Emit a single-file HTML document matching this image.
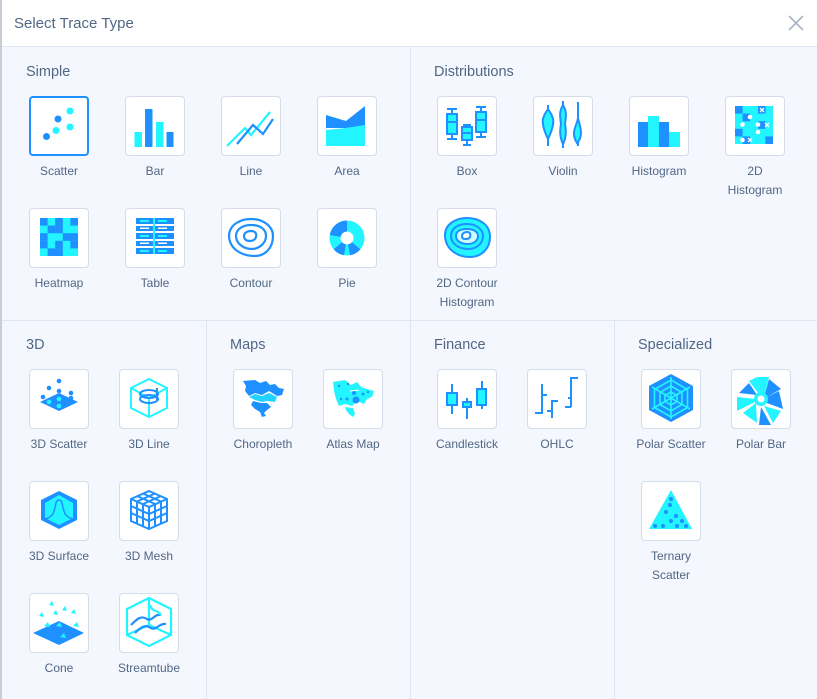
<!DOCTYPE html>
<html><head><meta charset="utf-8"><style>
*{margin:0;padding:0;box-sizing:border-box}
body{width:817px;height:699px;overflow:hidden;background:#f5f7fe;font-family:"Liberation Sans",sans-serif;color:#506784;position:relative}
#lb{position:absolute;left:0;top:0;width:2px;height:699px;background:#c8ced8}
#hd{position:absolute;left:2px;top:0;width:815px;height:47px;background:#fff;border-bottom:1px solid #dfe6f1}
#hd .t{position:absolute;left:12px;top:15px;font-size:15px;color:#506784}
.x{position:absolute;left:786px;top:15px;width:16px;height:16px}
.vl{position:absolute;background:#dfe6f1;width:1px}
.hl{position:absolute;background:#dfe6f1;height:1px}
.h{position:absolute;font-size:14.5px;color:#506784}
.tile{position:absolute;width:60px;height:60px;background:#fff;border:1px solid #d5dde9;border-radius:4px}
.tile.sel{border:2px solid #1e90ff}
.tile svg{position:absolute;left:-1px;top:-1px;width:60px;height:60px}
.tile.sel svg{left:-2px;top:-2px}
.lb{position:absolute;width:100px;text-align:center;font-size:12px;line-height:19px;color:#506784}
</style></head><body>
<div id="lb"></div>
<div id="hd"><div class="t">Select Trace Type</div>
<svg class="x" viewBox="0 0 16 16"><path d="M1 1L15 15M15 1L1 15" stroke="#a8b3c4" stroke-width="1.6"/></svg></div>
<div class="vl" style="left:410px;top:48px;height:651px"></div>
<div class="hl" style="left:2px;top:320px;width:815px"></div>
<div class="vl" style="left:206px;top:320px;height:379px"></div>
<div class="vl" style="left:614px;top:320px;height:379px"></div>

<div class="h" style="left:26px;top:64px">Simple</div>
<div class="h" style="left:434px;top:64px">Distributions</div>
<div class="h" style="left:26px;top:337px">3D</div>
<div class="h" style="left:230px;top:337px">Maps</div>
<div class="h" style="left:434px;top:337px">Finance</div>
<div class="h" style="left:638px;top:337px">Specialized</div>

<!-- Scatter -->
<div class="tile sel" style="left:29px;top:96px"><svg viewBox="0 0 60 60"><circle cx="17.5" cy="40.5" r="3.5" fill="#1e90ff"/><circle cx="27" cy="34.5" r="3.5" fill="#22f5ff"/><circle cx="29" cy="23" r="3.5" fill="#1e90ff"/><circle cx="41" cy="15" r="3.5" fill="#22f5ff"/><circle cx="41" cy="31" r="3.5" fill="#22f5ff"/></svg></div>
<div class="lb" style="left:9px;top:162px">Scatter</div>
<!-- Bar -->
<div class="tile" style="left:125px;top:96px"><svg viewBox="0 0 60 60"><rect x="9.5" y="36" width="7.5" height="15" fill="#22f5ff"/><rect x="20" y="13" width="7.5" height="38" fill="#1e90ff"/><rect x="31" y="26" width="7.5" height="25" fill="#22f5ff"/><rect x="41.5" y="36" width="7" height="15" fill="#1e90ff"/></svg></div>
<div class="lb" style="left:105px;top:162px">Bar</div>
<!-- Line -->
<div class="tile" style="left:221px;top:96px"><svg viewBox="0 0 60 60" fill="none" stroke-width="2.2"><path d="M6 50L24 32L30 39L49 16" stroke="#22f5ff"/><path d="M16 48L32 29L42 38L52 23" stroke="#1e90ff"/></svg></div>
<div class="lb" style="left:201px;top:162px">Line</div>
<!-- Area -->
<div class="tile" style="left:317px;top:96px"><svg viewBox="0 0 60 60"><path d="M9 19L29 25L48 10V30L29 32L9 32Z" fill="#1e90ff"/><path d="M9 34L29 32L48 29V50H9Z" fill="#22f5ff"/></svg></div>
<div class="lb" style="left:297px;top:162px">Area</div>
<!-- Heatmap -->
<div class="tile" style="left:29px;top:208px"><svg viewBox="0 0 60 60"><rect x="11" y="10" width="38" height="38" fill="#22f5ff"/><g fill="#1e90ff"><rect x="11" y="10" width="7.6" height="7.6"/><rect x="26.2" y="10" width="7.6" height="7.6"/><rect x="41.4" y="10" width="7.6" height="7.6"/><rect x="18.6" y="17.6" width="7.6" height="7.6"/><rect x="26.2" y="17.6" width="7.6" height="7.6"/><rect x="11" y="25.2" width="7.6" height="7.6"/><rect x="33.8" y="25.2" width="15.2" height="7.6"/><rect x="11" y="32.8" width="7.6" height="7.6"/><rect x="26.2" y="32.8" width="7.6" height="7.6"/><rect x="41.4" y="32.8" width="7.6" height="7.6"/><rect x="18.6" y="40.4" width="15.2" height="7.6"/></g></svg></div>
<div class="lb" style="left:9px;top:274px">Heatmap</div>
<!-- Table -->
<div class="tile" style="left:125px;top:208px"><svg viewBox="0 0 60 60"><g fill="#1e90ff"><rect x="11" y="10" width="38" height="6"/><rect x="11" y="18" width="38" height="5"/><rect x="11" y="25" width="38" height="6"/><rect x="11" y="33" width="38" height="5"/><rect x="11" y="40" width="38" height="6"/></g><rect x="28" y="10" width="2" height="36" fill="#22f5ff"/><g fill="#22f5ff"><rect x="15" y="12" width="9" height="2"/><rect x="33" y="12" width="9" height="2"/><rect x="15" y="27" width="9" height="2"/><rect x="33" y="27" width="9" height="2"/><rect x="15" y="42" width="9" height="2"/><rect x="33" y="42" width="9" height="2"/></g><g fill="#fff"><rect x="15" y="19.5" width="9" height="1.5"/><rect x="33" y="19.5" width="9" height="1.5"/><rect x="15" y="34.5" width="9" height="1.5"/><rect x="33" y="34.5" width="9" height="1.5"/></g></svg></div>
<div class="lb" style="left:105px;top:274px">Table</div>
<!-- Contour -->
<div class="tile" style="left:221px;top:208px"><svg viewBox="0 0 60 60" fill="none" stroke="#1e90ff" stroke-width="2.2"><path d="M8 27C9 16 20 11 30 11C42 11 52 18 52 28C52 40 44 48 34 48C22 48 8 42 8 27Z"/><path d="M15 28C15 21 22 17 30 17C39 17 45 21 45 28C45 35 38 41 31 41C22 41 15 35 15 28Z"/><path d="M23 28C23 25 26 23 30 23C34 23 36 25 35 29C34 32 31 33 29 33C25 33 23 31 23 28Z"/></svg></div>
<div class="lb" style="left:201px;top:274px">Contour</div>
<!-- Pie -->
<div class="tile" style="left:317px;top:208px"><svg viewBox="0 0 60 60"><circle cx="30" cy="30" r="12" fill="none" stroke="#22f5ff" stroke-width="11"/><path d="M30 12.5A17.5 17.5 0 0 0 12.8 27L23.6 28.9A6.5 6.5 0 0 1 30 23.5Z" fill="#1e90ff"/><path d="M43.4 41.2A17.5 17.5 0 0 1 33 47.2L31.1 36.4A6.5 6.5 0 0 0 35 34.2Z" fill="#1e90ff"/><path d="M27 47.2A17.5 17.5 0 0 1 16.6 41.2L25 34.2A6.5 6.5 0 0 0 28.9 36.4Z" fill="#1e90ff"/></svg></div>
<div class="lb" style="left:297px;top:274px">Pie</div>

<!-- Box -->
<div class="tile" style="left:437px;top:96px"><svg viewBox="0 0 60 60" fill="none" stroke="#1e90ff" stroke-width="2"><path d="M10 13H20M15 13V18M15 38V43M10 43H20M26 29H34M30 29V31M30 44V49M26 49H34M39 11H49M44 11V16M44 36V41M39 41H49"/><rect x="10" y="18" width="10" height="20" fill="#22f5ff"/><path d="M10 26H20"/><rect x="25" y="31" width="10" height="13" fill="#22f5ff"/><path d="M25 37H35"/><rect x="39" y="16" width="10" height="20" fill="#22f5ff"/><path d="M39 24H49"/></svg></div>
<div class="lb" style="left:417px;top:162px">Box</div>
<!-- Violin -->
<div class="tile" style="left:533px;top:96px"><svg viewBox="0 0 60 60" stroke="#1e90ff" stroke-width="2" fill="#22f5ff"><path d="M15 9V50"/><path d="M15 13C9 22 7 26 15 43C23 26 21 22 15 13Z"/><path d="M30 5V52"/><path d="M30 9C26 16 27 20 28 28C26 38 28 44 30 48C32 44 34 38 32 28C33 20 34 16 30 9Z"/><path d="M45 6V50"/><path d="M45 22C44 30 37 36 44 47C51 40 47 30 45 22Z"/></svg></div>
<div class="lb" style="left:513px;top:162px">Violin</div>
<!-- Histogram -->
<div class="tile" style="left:629px;top:96px"><svg viewBox="0 0 60 60"><rect x="9" y="26" width="10" height="25" fill="#1e90ff"/><rect x="19" y="20" width="11" height="31" fill="#22f5ff"/><rect x="30" y="26" width="10" height="25" fill="#1e90ff"/><rect x="40" y="36" width="11" height="15" fill="#22f5ff"/></svg></div>
<div class="lb" style="left:609px;top:162px">Histogram</div>
<!-- 2D Histogram -->
<div class="tile" style="left:725px;top:96px"><svg viewBox="0 0 60 60"><rect x="10" y="10" width="38" height="38" fill="#22f5ff"/><g fill="#1e90ff"><rect x="10" y="10" width="7.6" height="7.6"/><rect x="17.6" y="17.6" width="7.6" height="7.6"/><rect x="33" y="10" width="7.6" height="7.6"/><rect x="10" y="32.8" width="7.6" height="7.6"/><rect x="40.4" y="40.4" width="7.6" height="7.6"/><rect x="17.6" y="40.4" width="7.6" height="7.6"/><rect x="33" y="25.2" width="7.6" height="7.6"/></g><g fill="#fff"><circle cx="25" cy="21" r="2.3"/><circle cx="17.5" cy="28.5" r="2.3"/><circle cx="33" cy="28.5" r="2.3"/><circle cx="33" cy="36" r="2.3"/><circle cx="17.5" cy="44" r="2.3"/></g><path d="M35 12L39 16M39 12L35 16M40 27L44 31M44 27L40 31M23 42L27 46M27 42L23 46" stroke="#fff" stroke-width="1.3"/></svg></div>
<div class="lb" style="left:705px;top:162px;line-height:19px">2D<br>Histogram</div>
<!-- 2D Contour -->
<div class="tile" style="left:437px;top:208px"><svg viewBox="0 0 60 60" stroke="#1e90ff" stroke-width="2"><path d="M8 27C8 16 19 10 30 10C43 10 53 17 53 29C53 41 44 49 33 49C20 49 8 41 8 27Z" fill="#22f5ff"/><path d="M14 28C14 20 21 16 30 16C39 16 46 21 46 28C46 36 39 41 31 41C21 41 14 35 14 28Z" fill="#22f5ff"/><path d="M19 28C19 23 24 21 30 21C37 21 41 24 41 28C41 33 36 36 31 36C24 36 19 33 19 28Z" fill="#ccfcff"/><path d="M25 28C25 26 27 24 30 24C33 24 34 26 33 29C32 31 30 31 28 31C26 31 25 30 25 28Z" fill="#fff"/></svg></div>
<div class="lb" style="left:417px;top:274px">2D Contour<br>Histogram</div>

<!-- 3D Scatter -->
<div class="tile" style="left:29px;top:369px"><svg viewBox="0 0 60 60"><path d="M11 33L30 24L49 33L30 42Z" fill="#1e90ff"/><g fill="#1e90ff"><circle cx="30" cy="12" r="2.3"/><circle cx="20" cy="19" r="2.3"/><circle cx="30" cy="22" r="2.3"/><circle cx="42" cy="24" r="2.3"/><circle cx="14" cy="28" r="2.3"/><circle cx="42" cy="29" r="2.3"/></g><g fill="#22f5ff"><circle cx="20" cy="33" r="2.3"/><circle cx="30" cy="30" r="2.3"/><circle cx="30" cy="37" r="2.3"/></g></svg></div>
<div class="lb" style="left:9px;top:435px">3D Scatter</div>
<!-- 3D Line -->
<div class="tile" style="left:119px;top:369px"><svg viewBox="0 0 60 60" fill="none" stroke-width="2"><path d="M30 10L48 19V39L30 48L12 39V19Z M12 19L30 29L48 19 M30 29V48" stroke="#22f5ff"/><ellipse cx="30" cy="25" rx="9" ry="4" stroke="#1e90ff"/><ellipse cx="30" cy="30" rx="9" ry="4" stroke="#1e90ff"/><path d="M38 19V31" stroke="#1e90ff"/></svg></div>
<div class="lb" style="left:99px;top:435px">3D Line</div>
<!-- 3D Surface -->
<div class="tile" style="left:29px;top:481px"><svg viewBox="0 0 60 60"><path d="M30 10L48 19V39L30 48L12 39V19Z" fill="#1e90ff"/><path d="M16 22L30 14L44 22V37L30 44L16 37Z" fill="#22f5ff"/><path d="M16 38C24 36 25 32 27 22C28 18 32 18 33 22C35 32 36 36 44 38" fill="none" stroke="#1e90ff" stroke-width="1.5"/></svg></div>
<div class="lb" style="left:9px;top:547px">3D Surface</div>
<!-- 3D Mesh -->
<div class="tile" style="left:119px;top:481px"><svg viewBox="0 0 60 60" fill="none" stroke="#1e90ff" stroke-width="2"><path d="M30 10L48 18V40L30 48L12 40V18Z M12 18L30 26L48 18 M30 26V48"/><path d="M18 15L36 23M24 12.5L42 20.5M42 15L24 23M36 12.5L18 20.5M12 25L30 33L48 25M12 32L30 40L48 32M18 21V43M24 23.5V45.5M36 23.5V45.5M42 21V43"/></svg></div>
<div class="lb" style="left:99px;top:547px">3D Mesh</div>
<!-- Cone -->
<div class="tile" style="left:29px;top:593px"><svg viewBox="0 0 60 60"><path d="M4 40L30 28L55 40L30 52Z" fill="#1e90ff"/><g fill="#22f5ff"><path d="M20 12l3 -4l2 5z"/><path d="M33 17l3 -4l2 5z"/><path d="M42 20l3 -4l2 5z"/><path d="M10 23l3 -4l2 5z"/><path d="M24 21l3 -4l2 5z"/><path d="M15 33l4 -4l2 5z"/><path d="M27 33l4 -4l2 5z"/><path d="M44 33l4 -4l2 5z"/><path d="M31 44l4 -4l2 5z"/></g></svg></div>
<div class="lb" style="left:9px;top:659px">Cone</div>
<!-- Streamtube -->
<div class="tile" style="left:119px;top:593px"><svg viewBox="0 0 60 60" fill="none" stroke-width="2.2"><path d="M30 5L52 16V42L30 53L8 42V16Z M8 42L30 32L52 42 M30 5V32" stroke="#22f5ff"/><path d="M12 32C18 26 22 22 28 26C33 29 36 20 42 22" stroke="#1e90ff"/><path d="M16 40C22 34 26 31 32 35C37 38 40 30 47 31" stroke="#1e90ff"/><path d="M31 12C34 20 38 16 42 22" stroke="#22f5ff"/></svg></div>
<div class="lb" style="left:99px;top:659px">Streamtube</div>

<!-- Choropleth -->
<div class="tile" style="left:233px;top:369px"><svg viewBox="0 0 60 60"><path d="M10 12L22 11L27 14L33 12L37 16L42 15L46 19L51 20L49 26L44 27L36 22L29 26L22 24L16 27L12 22L13 17Z" fill="#1e90ff"/><path d="M16 28L22 25L29 27L36 24L44 28L42 33L34 32L29 33L22 31Z" fill="#22d3ff"/><path d="M20 32L28 34L34 34L38 38L34 41L31 44L33 47L29 48L27 43L22 40L18 36Z" fill="#1e90ff"/></svg></div>
<div class="lb" style="left:213px;top:435px">Choropleth</div>
<!-- Atlas Map -->
<div class="tile" style="left:323px;top:369px"><svg viewBox="0 0 60 60"><path d="M10 13L22 11L28 16L34 13L38 18L44 20L51 22L49 28L44 30L41 35L34 32L29 37L22 35L16 37L13 30L11 22Z" fill="#22f5ff"/><path d="M22 38L30 39L32 45L30 48L26 45L23 41Z" fill="#22f5ff"/><g fill="#1e90ff"><circle cx="33" cy="31" r="3.5"/><circle cx="31" cy="24" r="2"/><circle cx="24" cy="30" r="1.5"/><circle cx="40" cy="25" r="1.5"/><circle cx="16" cy="17" r="1.2"/><circle cx="25" cy="15" r="1.2"/><circle cx="45" cy="23" r="1.2"/><circle cx="18" cy="30" r="1.2"/></g><path d="M27 22L36 21" stroke="#fff" stroke-width="1"/></svg></div>
<div class="lb" style="left:303px;top:435px">Atlas Map</div>

<!-- Candlestick -->
<div class="tile" style="left:437px;top:369px"><svg viewBox="0 0 60 60" stroke="#1e90ff" stroke-width="2"><path d="M15 15V45M30 29V50M45 12V40" fill="none"/><rect x="10" y="24" width="10" height="12" fill="#22f5ff"/><rect x="26" y="33" width="8" height="5" fill="#22f5ff"/><rect x="40" y="20" width="9" height="16" fill="#22f5ff"/></svg></div>
<div class="lb" style="left:417px;top:435px">Candlestick</div>
<!-- OHLC -->
<div class="tile" style="left:527px;top:369px"><svg viewBox="0 0 60 60" fill="none" stroke="#1e90ff" stroke-width="2"><path d="M15 15V44H8M15 26H20M25 49V32H31M25 42H20M44 38V9H51M44 38H38M44 29H41"/></svg></div>
<div class="lb" style="left:507px;top:435px">OHLC</div>

<!-- Polar Scatter -->
<div class="tile" style="left:641px;top:369px"><svg viewBox="0 0 60 60"><path d="M30 5L52 17V41L30 53L8 41V17Z" fill="#1e90ff"/><g fill="none" stroke="#22f5ff" stroke-width="1.6"><path d="M30 11L46.5 20.5V38.5L30 48L13.5 38.5V20.5Z"/><path d="M30 17L41 23.5V35.5L30 42L19 35.5V23.5Z"/><path d="M30 23L36 26.5V32.5L30 36L24 32.5V26.5Z"/><path d="M30 8V50M11 18L49 40M49 18L11 40"/></g></svg></div>
<div class="lb" style="left:621px;top:435px">Polar Scatter</div>
<!-- Polar Bar -->
<div class="tile" style="left:731px;top:369px"><svg viewBox="0 0 60 60"><g transform="translate(30 30)"><path d="M-4 -22L8 -22L4 -5L-2 -5Z" fill="#22f5ff"/><path d="M8 -20L20 -10L6 -2L4 -5Z" fill="#1e90ff"/><path d="M18 -8L22 10L6 4L6 -2Z" fill="#1e90ff"/><path d="M20 12L12 24L3 7Z" fill="#22f5ff"/><path d="M10 26L-2 26L0 8Z" fill="#1e90ff"/><path d="M-4 24L-18 14L-5 4Z" fill="#22f5ff"/><path d="M-24 12L-24 -2L-6 0L-6 3Z" fill="#22f5ff"/><path d="M-22 -6L-12 -16L-4 -4Z" fill="#1e90ff"/><path d="M-12 -18L-4 -22L-2 -5Z" fill="#22f5ff"/><circle r="7" fill="#22f5ff"/><circle r="3.5" fill="#fff"/></g></svg></div>
<div class="lb" style="left:711px;top:435px">Polar Bar</div>
<!-- Ternary -->
<div class="tile" style="left:641px;top:481px"><svg viewBox="0 0 60 60"><path d="M30 9L51 48H8Z" fill="#22f5ff"/><g fill="#1e90ff"><circle cx="30" cy="18" r="2"/><circle cx="29" cy="24" r="2"/><circle cx="25" cy="31" r="2"/><circle cx="35" cy="35" r="2"/><circle cx="30" cy="40" r="2"/><circle cx="41" cy="40" r="2"/><circle cx="14" cy="45" r="2"/><circle cx="22" cy="45" r="2"/><circle cx="36" cy="45" r="2"/><circle cx="45" cy="45" r="2"/></g></svg></div>
<div class="lb" style="left:621px;top:547px">Ternary<br>Scatter</div>
</body></html>
